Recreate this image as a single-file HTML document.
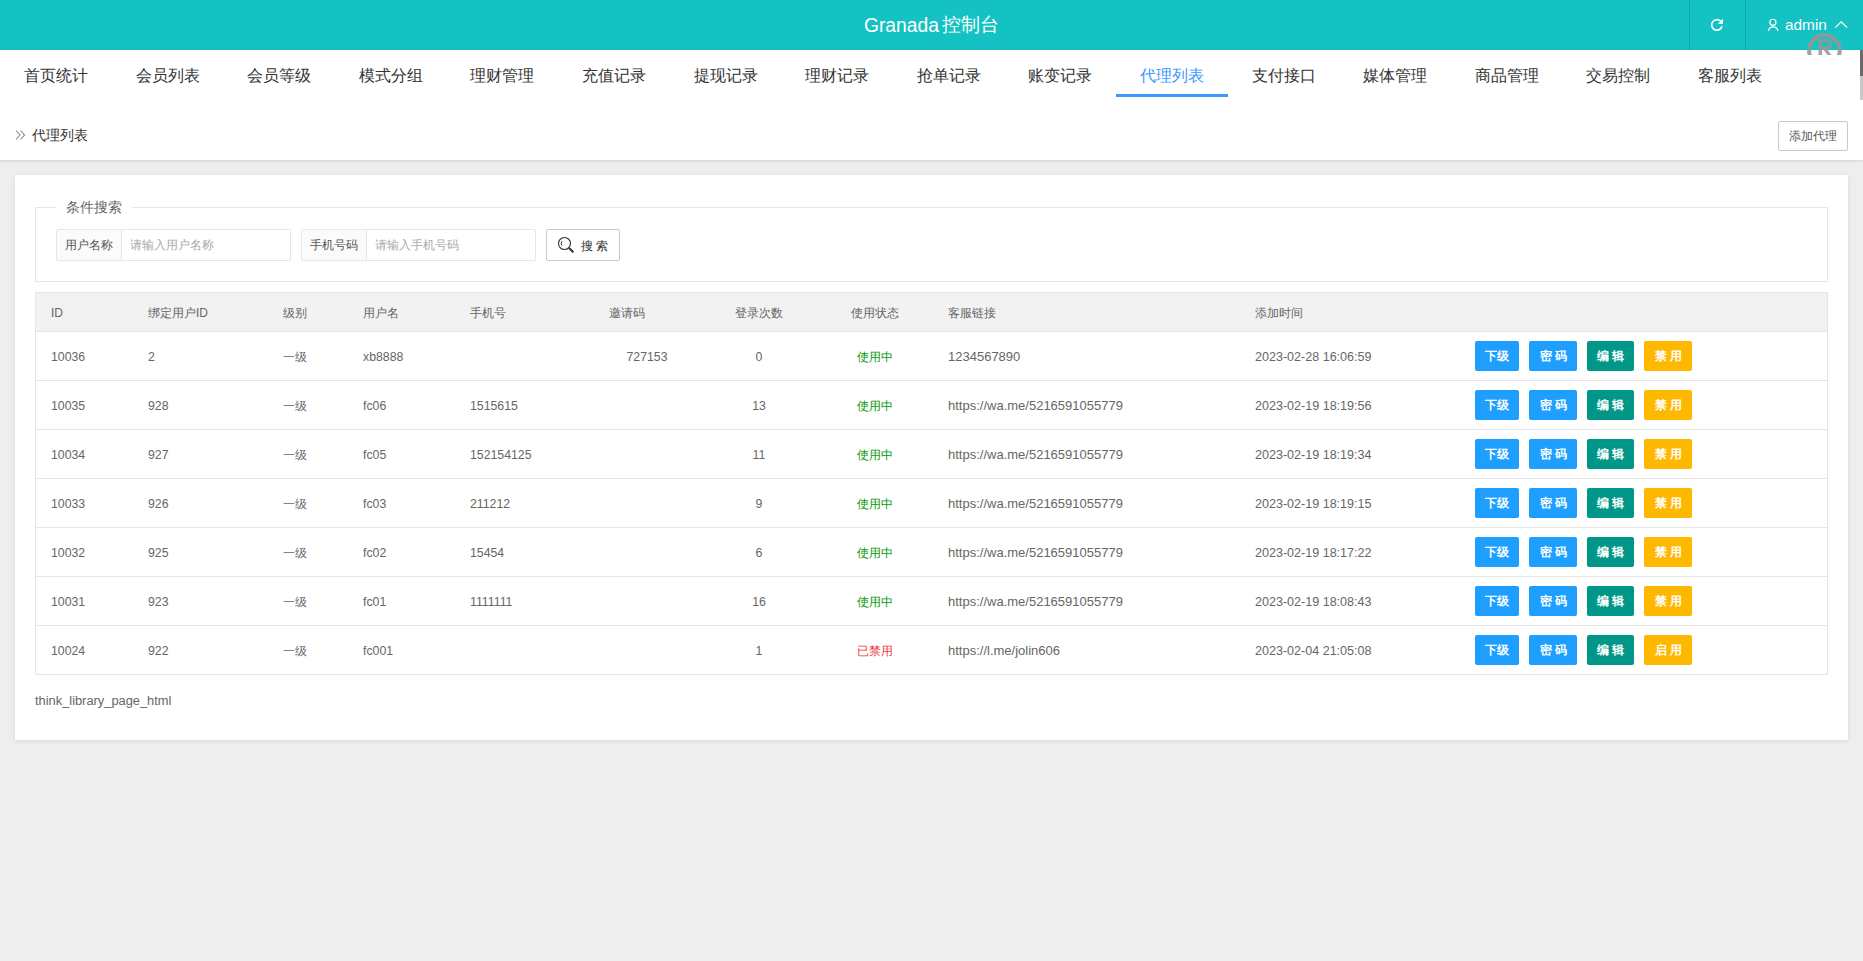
<!DOCTYPE html>
<html><head><meta charset="utf-8">
<style>
*{box-sizing:border-box;margin:0;padding:0}
html,body{width:1863px;height:961px;overflow:hidden}
body{background:#eeeeee;font-family:"Liberation Sans",sans-serif;color:#666;position:relative}
.a{position:absolute;white-space:nowrap}
#hd{position:absolute;left:0;top:0;width:1863px;height:50px;background:#14c2c3;overflow:hidden}
#title{position:absolute;left:0;width:1863px;top:13px;text-align:center;color:#fff;font-size:18px;line-height:24px}
.vl{position:absolute;top:0;width:1px;height:50px;background:rgba(0,0,0,.13)}
#nav{position:absolute;left:0;top:50px;width:1863px;height:110px;background:#fff;box-shadow:0 1px 3px rgba(0,0,0,.12)}
.ni{position:absolute;top:15px;font-size:16px;line-height:22px;color:#333}
.ni.on{color:#3a98ff}
#ul{position:absolute;left:1116px;top:44px;width:112px;height:3px;background:#3a98ff}
#card{position:absolute;left:15px;top:175px;width:1833px;height:565px;background:#fff;box-shadow:0 1px 4px rgba(0,0,0,.1)}
#fs{position:absolute;left:35px;top:207px;width:1793px;height:75px;border:1px solid #e6e6e6}
#legend{position:absolute;left:56px;top:198px;padding:0 10px;background:#fff;font-size:14px;line-height:18px;color:#666}
.lbl{position:absolute;top:229px;height:32px;border:1px solid #e6e6e6;background:#fbfbfb;border-radius:2px 0 0 2px;font-size:12px;line-height:30px;color:#555;padding-left:8px}
.inp{position:absolute;top:229px;height:32px;border:1px solid #e6e6e6;border-left:none;background:#fff;border-radius:0 2px 2px 0;font-size:12px;line-height:30px;color:#aaa;padding-left:8px}
#sbtn{position:absolute;left:546px;top:229px;width:74px;height:32px;border:1px solid #c9c9c9;border-radius:2px;background:#fff}
#tbl{position:absolute;left:35px;top:292px;width:1793px;height:383px;border:1px solid #e6e6e6}
#th{position:absolute;left:36px;top:293px;width:1791px;height:38px;background:#f2f2f2}
.rl{position:absolute;left:36px;width:1791px;height:1px;background:#e6e6e6}
.t{position:absolute;font-size:12px;line-height:16px;color:#666;white-space:nowrap}
.n{font-size:12.3px}
.tm{font-size:12.55px}
.lk{font-size:13px}
.c{transform:translateX(-50%)}
.g{color:#0a990a}
.r{color:#e83c3c}
.b{position:absolute;height:30px;border-radius:2px;color:#fff;font-size:12px;line-height:30px;text-align:center;font-weight:bold}
.ls{letter-spacing:3px;padding-left:3px}
.b1{background:#1e9fff}.b2{background:#009688}.b3{background:#ffb800}
</style></head><body>
<div id="hd"><div class="a" style="left:864px;top:12px;color:#fff;line-height:26px;font-size:20px;transform:scaleX(.962);transform-origin:0 0">Granada</div><div class="a" id="tlc" style="left:942px;top:12px;color:#fff;line-height:26px;font-size:19px">控制台</div>
<div class="vl" style="left:1689px"></div><div class="vl" style="left:1745px"></div>
<svg class="a" style="left:1700px;top:10px" width="30" height="30" viewBox="0 0 30 30"><path d="M20.61 11.19 A5.25 5.25 0 1 0 21.97 16.26" fill="none" stroke="#fff" stroke-width="1.6"/><path d="M22.9 8.6 L23 13.9 L17.8 13.9 Z" fill="#fff"/></svg>
<svg class="a" style="left:1760px;top:10px" width="24" height="24" viewBox="0 0 24 24"><circle cx="12.9" cy="12.3" r="3.05" fill="none" stroke="#fff" stroke-width="1.2"/><path d="M8.4 21 A4.8 4.8 0 0 1 17.9 21" fill="none" stroke="#fff" stroke-width="1.2"/></svg>
<div class="a" style="left:1785.2px;top:15px;font-size:15px;line-height:20px;color:#fff;transform:scaleX(1.025);transform-origin:0 0">admin</div>
<svg class="a" style="left:1830px;top:15px" width="22" height="18" viewBox="0 0 22 18"><path d="M5.2 12.6 L11.2 6.8 L17.2 12.6" fill="none" stroke="#fff" stroke-width="1.3"/></svg>
</div>
<div id="nav">
<div class="ni" style="left:24.0px">首页统计</div>
<div class="ni" style="left:135.6px">会员列表</div>
<div class="ni" style="left:247.2px">会员等级</div>
<div class="ni" style="left:358.8px">模式分组</div>
<div class="ni" style="left:470.4px">理财管理</div>
<div class="ni" style="left:582.0px">充值记录</div>
<div class="ni" style="left:693.6px">提现记录</div>
<div class="ni" style="left:805.2px">理财记录</div>
<div class="ni" style="left:916.8px">抢单记录</div>
<div class="ni" style="left:1028.4px">账变记录</div>
<div class="ni on" style="left:1140.0px">代理列表</div>
<div class="ni" style="left:1251.6px">支付接口</div>
<div class="ni" style="left:1363.2px">媒体管理</div>
<div class="ni" style="left:1474.8px">商品管理</div>
<div class="ni" style="left:1586.4px">交易控制</div>
<div class="ni" style="left:1698.0px">客服列表</div>
<div id="ul"></div></div>
<div id="card"></div><div id="fs"></div><div id="legend">条件搜索</div>
<div class="a" style="left:15px;top:127px;width:11px;height:16px"><svg width="11" height="16" viewBox="0 0 11 16"><path d="M1 3.5 L5 8 L1 12.5 M5.5 3.5 L9.5 8 L5.5 12.5" fill="none" stroke="#888" stroke-width="1.1"/></svg></div>
<div class="a" id="bc" style="left:32px;top:127px;font-size:14px;line-height:16px;color:#333">代理列表</div>
<div class="a" id="addbtn" style="left:1778px;top:121px;width:70px;height:30px;border:1px solid #c9c9c9;border-radius:2px;background:#fff;font-size:12px;line-height:28px;text-align:center;color:#555">添加代理</div>
<div class="lbl" style="left:56px;width:66px">用户名称</div>
<div class="inp" style="left:122px;width:169px">请输入用户名称</div>
<div class="lbl" style="left:301px;width:66px">手机号码</div>
<div class="inp" style="left:367px;width:169px">请输入手机号码</div>
<div id="sbtn"></div>
<div class="a" style="left:557px;top:236px"><svg width="18" height="18" viewBox="0 0 18 18"><circle cx="7.5" cy="7.5" r="6" fill="none" stroke="#333" stroke-width="1.1"/><path d="M5 5.3 A3.6 3.6 0 0 0 4.9 9.6" fill="none" stroke="#333" stroke-width="1"/><path d="M12.3 12.3 L15.8 15.8" stroke="#333" stroke-width="2.1" stroke-linecap="round"/></svg></div>
<div class="a" style="left:581px;top:238px;font-size:12px;line-height:16px;color:#333;letter-spacing:3px">搜索</div>
<div id="tbl"></div><div id="th"></div>
<div class="t" style="left:51px;top:305px">ID</div>
<div class="t" style="left:148px;top:305px">绑定用户ID</div>
<div class="t" style="left:283px;top:305px">级别</div>
<div class="t" style="left:363px;top:305px">用户名</div>
<div class="t" style="left:470px;top:305px">手机号</div>
<div class="t" style="left:609px;top:305px">邀请码</div>
<div class="t" style="left:735px;top:305px">登录次数</div>
<div class="t" style="left:851px;top:305px">使用状态</div>
<div class="t" style="left:948px;top:305px">客服链接</div>
<div class="t" style="left:1255px;top:305px">添加时间</div>
<div class="rl" style="top:331px"></div>
<div class="t n" style="left:51px;top:349px">10036</div>
<div class="t n" style="left:148px;top:349px">2</div>
<div class="t " style="left:283px;top:349px">一级</div>
<div class="t n" style="left:363px;top:349px">xb8888</div>
<div class="t c n" style="left:647px;top:349px">727153</div>
<div class="t c n" style="left:759px;top:349px">0</div>
<div class="t c g" style="left:875px;top:349px">使用中</div>
<div class="t lk" style="left:948px;top:349px">1234567890</div>
<div class="t tm" style="left:1255px;top:349px">2023-02-28 16:06:59</div>
<div class="b b1" style="left:1475px;top:341px;width:44px">下级</div>
<div class="b b1 ls" style="left:1529px;top:341px;width:48px">密码</div>
<div class="b b2 ls" style="left:1587px;top:341px;width:47px">编辑</div>
<div class="b b3 ls" style="left:1644px;top:341px;width:48px">禁用</div>
<div class="rl" style="top:380px"></div>
<div class="t n" style="left:51px;top:398px">10035</div>
<div class="t n" style="left:148px;top:398px">928</div>
<div class="t " style="left:283px;top:398px">一级</div>
<div class="t n" style="left:363px;top:398px">fc06</div>
<div class="t n" style="left:470px;top:398px">1515615</div>
<div class="t c n" style="left:759px;top:398px">13</div>
<div class="t c g" style="left:875px;top:398px">使用中</div>
<div class="t lk" style="left:948px;top:398px">https://wa.me/5216591055779</div>
<div class="t tm" style="left:1255px;top:398px">2023-02-19 18:19:56</div>
<div class="b b1" style="left:1475px;top:390px;width:44px">下级</div>
<div class="b b1 ls" style="left:1529px;top:390px;width:48px">密码</div>
<div class="b b2 ls" style="left:1587px;top:390px;width:47px">编辑</div>
<div class="b b3 ls" style="left:1644px;top:390px;width:48px">禁用</div>
<div class="rl" style="top:429px"></div>
<div class="t n" style="left:51px;top:447px">10034</div>
<div class="t n" style="left:148px;top:447px">927</div>
<div class="t " style="left:283px;top:447px">一级</div>
<div class="t n" style="left:363px;top:447px">fc05</div>
<div class="t n" style="left:470px;top:447px">152154125</div>
<div class="t c n" style="left:759px;top:447px">11</div>
<div class="t c g" style="left:875px;top:447px">使用中</div>
<div class="t lk" style="left:948px;top:447px">https://wa.me/5216591055779</div>
<div class="t tm" style="left:1255px;top:447px">2023-02-19 18:19:34</div>
<div class="b b1" style="left:1475px;top:439px;width:44px">下级</div>
<div class="b b1 ls" style="left:1529px;top:439px;width:48px">密码</div>
<div class="b b2 ls" style="left:1587px;top:439px;width:47px">编辑</div>
<div class="b b3 ls" style="left:1644px;top:439px;width:48px">禁用</div>
<div class="rl" style="top:478px"></div>
<div class="t n" style="left:51px;top:496px">10033</div>
<div class="t n" style="left:148px;top:496px">926</div>
<div class="t " style="left:283px;top:496px">一级</div>
<div class="t n" style="left:363px;top:496px">fc03</div>
<div class="t n" style="left:470px;top:496px">211212</div>
<div class="t c n" style="left:759px;top:496px">9</div>
<div class="t c g" style="left:875px;top:496px">使用中</div>
<div class="t lk" style="left:948px;top:496px">https://wa.me/5216591055779</div>
<div class="t tm" style="left:1255px;top:496px">2023-02-19 18:19:15</div>
<div class="b b1" style="left:1475px;top:488px;width:44px">下级</div>
<div class="b b1 ls" style="left:1529px;top:488px;width:48px">密码</div>
<div class="b b2 ls" style="left:1587px;top:488px;width:47px">编辑</div>
<div class="b b3 ls" style="left:1644px;top:488px;width:48px">禁用</div>
<div class="rl" style="top:527px"></div>
<div class="t n" style="left:51px;top:545px">10032</div>
<div class="t n" style="left:148px;top:545px">925</div>
<div class="t " style="left:283px;top:545px">一级</div>
<div class="t n" style="left:363px;top:545px">fc02</div>
<div class="t n" style="left:470px;top:545px">15454</div>
<div class="t c n" style="left:759px;top:545px">6</div>
<div class="t c g" style="left:875px;top:545px">使用中</div>
<div class="t lk" style="left:948px;top:545px">https://wa.me/5216591055779</div>
<div class="t tm" style="left:1255px;top:545px">2023-02-19 18:17:22</div>
<div class="b b1" style="left:1475px;top:537px;width:44px">下级</div>
<div class="b b1 ls" style="left:1529px;top:537px;width:48px">密码</div>
<div class="b b2 ls" style="left:1587px;top:537px;width:47px">编辑</div>
<div class="b b3 ls" style="left:1644px;top:537px;width:48px">禁用</div>
<div class="rl" style="top:576px"></div>
<div class="t n" style="left:51px;top:594px">10031</div>
<div class="t n" style="left:148px;top:594px">923</div>
<div class="t " style="left:283px;top:594px">一级</div>
<div class="t n" style="left:363px;top:594px">fc01</div>
<div class="t n" style="left:470px;top:594px">1111111</div>
<div class="t c n" style="left:759px;top:594px">16</div>
<div class="t c g" style="left:875px;top:594px">使用中</div>
<div class="t lk" style="left:948px;top:594px">https://wa.me/5216591055779</div>
<div class="t tm" style="left:1255px;top:594px">2023-02-19 18:08:43</div>
<div class="b b1" style="left:1475px;top:586px;width:44px">下级</div>
<div class="b b1 ls" style="left:1529px;top:586px;width:48px">密码</div>
<div class="b b2 ls" style="left:1587px;top:586px;width:47px">编辑</div>
<div class="b b3 ls" style="left:1644px;top:586px;width:48px">禁用</div>
<div class="rl" style="top:625px"></div>
<div class="t n" style="left:51px;top:643px">10024</div>
<div class="t n" style="left:148px;top:643px">922</div>
<div class="t " style="left:283px;top:643px">一级</div>
<div class="t n" style="left:363px;top:643px">fc001</div>
<div class="t c n" style="left:759px;top:643px">1</div>
<div class="t c r" style="left:875px;top:643px">已禁用</div>
<div class="t lk" style="left:948px;top:643px">https://l.me/jolin606</div>
<div class="t tm" style="left:1255px;top:643px">2023-02-04 21:05:08</div>
<div class="b b1" style="left:1475px;top:635px;width:44px">下级</div>
<div class="b b1 ls" style="left:1529px;top:635px;width:48px">密码</div>
<div class="b b2 ls" style="left:1587px;top:635px;width:47px">编辑</div>
<div class="b b3 ls" style="left:1644px;top:635px;width:48px">启用</div>
<div class="a" style="left:1800px;top:28px;width:50px;height:27px;overflow:hidden"><svg width="50" height="27" viewBox="0 0 50 27"><g fill="none" stroke="rgba(150,150,150,.88)" stroke-width="4"><circle cx="24.4" cy="22.4" r="15.3"/></g><g fill="rgba(150,150,150,.88)"><rect x="18.5" y="11.3" width="3.5" height="16"/><rect x="16.5" y="11.3" width="3" height="1.6"/></g><g fill="none" stroke="rgba(150,150,150,.88)" stroke-width="3.3"><path d="M21 13 H27.4 A3.5 3.5 0 0 1 27.4 20 H21"/><path d="M24.2 20 L29.8 27.5"/></g></svg></div>
<div class="a" style="left:1860px;top:50px;width:3px;height:26px;background:#6b6b6b"></div>
<div class="a" style="left:1860px;top:76px;width:3px;height:24px;background:#c9c9c9"></div>
<div class="a" id="foot" style="left:35px;top:693px;font-size:12.85px;line-height:16px;color:#666">think_library_page_html</div>
</body></html>
